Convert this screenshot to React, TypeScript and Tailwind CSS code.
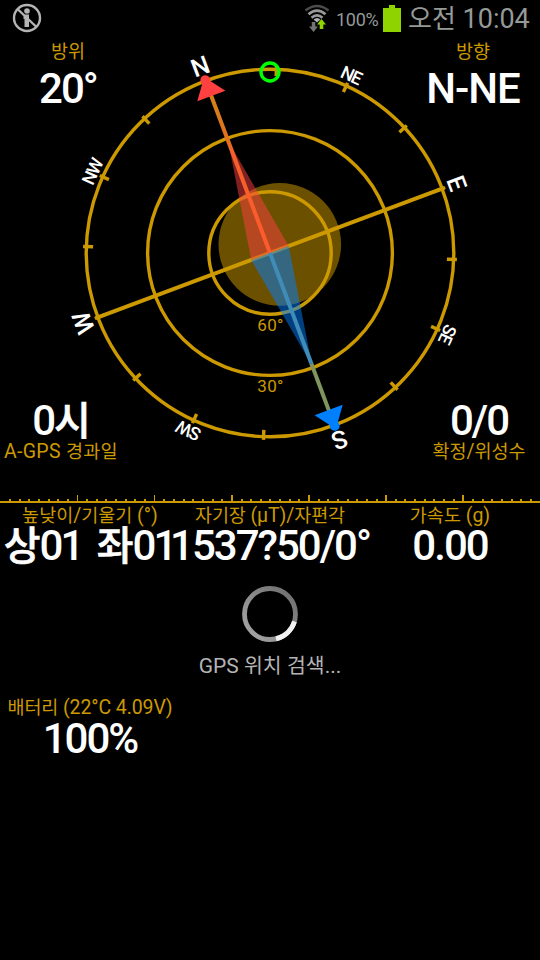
import React from "react";

const GOLD = "#cc9900";

const LABELS = [
  { t: "N", a: 0, big: true },
  { t: "NE", a: 45, big: false },
  { t: "E", a: 90, big: true },
  { t: "SE", a: 135, big: false },
  { t: "S", a: 180, big: true },
  { t: "SW", a: 225, big: false },
  { t: "W", a: 270, big: true },
  { t: "NW", a: 315, big: false },
];

function Compass() {
  const ticks = Array.from({ length: 16 }, (_, i) => i * 22.5);
  return (
    <svg width="400" height="400" viewBox="-200 -200 400 400" className="block overflow-visible">
      <defs>
        <linearGradient id="north" gradientUnits="userSpaceOnUse" x1="0" y1="-186" x2="0" y2="0">
          <stop offset="0" stopColor="#cf8a10" />
          <stop offset=".36" stopColor="#e27020" />
          <stop offset=".42" stopColor="#f4602a" />
          <stop offset="1" stopColor="#ff5a2c" />
        </linearGradient>
      </defs>
      <circle cx="9.8" cy="-8.6" r="61.3" fill="#6b5000" />
      <g fill="none" stroke={GOLD} strokeWidth="3.4">
        <circle r="61.2" />
        <circle r="122.4" />
        <circle r="183.8" />
      </g>
      <g transform="rotate(-20.5)">
        {ticks.map((a) => (
          <line key={a} y1="-177" y2="-187" stroke={GOLD} strokeWidth="3.4" transform={`rotate(${a})`} />
        ))}
        <line x1="-186" x2="186" stroke={GOLD} strokeWidth="4" />
        <path d="M0-120L20 0H-20Z" fill="#ff4040" fillOpacity=".5" />
        <path d="M0 120L20 0H-20Z" fill="#0080ff" fillOpacity=".5" />
        <rect x="-2" y="-186" width="4" height="186" fill="url(#north)" />
        <rect x="-2" y="118" width="4" height="66" fill="#7f9560" />
        <rect x="-2" y="0" width="4" height="118" fill="#408cb8" />
        <g fill="#ff4040">
          <circle cy="-184.500" r="5" />
          <path d="M0-188L15-167.500H-15Z" />
        </g>
        <g fill="#0080ff">
          <circle cy="184.500" r="5" />
          <path d="M0 188L15 167.500H-15Z" />
        </g>
        {LABELS.map((l) => (
          <text
            key={l.t}
            transform={`rotate(${l.a})`}
            y={l.big ? -190.5 : -189}
            textAnchor="middle"
            fill="#fff"
            fontWeight="500"
            fontSize={l.big ? 25 : 18}
            letterSpacing={l.big ? 0 : -1.4}
          >
            {l.t}
          </text>
        ))}
      </g>
      <circle cy="-181" r="9" fill="none" stroke="#00ff00" strokeWidth="3.4" />
      <g fill={GOLD} fontSize="17" textAnchor="middle" letterSpacing="0.3">
        <text x="0.5" y="78">60°</text>
        <text x="0.5" y="139">30°</text>
      </g>
    </svg>
  );
}

function Ruler() {
  const marks = Array.from({ length: 55 }, (_, i) => i + 1);
  return (
    <svg width="540" height="8" viewBox="0 0 540 8" className="block shrink-0">
      <rect y="6" width="540" height="2" fill={GOLD} />
      {marks.map((i) => {
        const major = i % 8 === 0;
        return (
          <rect
            key={i}
            x={Math.round(i * 9.645 - 0.6)}
            y={major ? 0 : 4}
            width={major && i < 20 ? 1 : 2}
            height={major ? 6 : 2}
            fill={GOLD}
          />
        );
      })}
    </svg>
  );
}

const HANGUL = /([\uac00-\ud7a3]+)/;

/* Hangul runs take their own size and tracking next to the Latin text. */
function Mixed({ text, hangul }: { text: string; hangul: string }) {
  return (
    <>
      {text.split(HANGUL).map((part, i) =>
        i % 2 ? (
          <span key={i} className={hangul}>
            {part}
          </span>
        ) : (
          part
        )
      )}
    </>
  );
}

function Label({ text, className = "" }: { text: string; className?: string }) {
  return (
    <div className={`h-6 text-[19.5px] leading-6 whitespace-pre text-[#cc9900] ${className}`}>
      <Mixed text={text} hangul="text-[18.5px]" />
    </div>
  );
}

function Value({ text, className = "tracking-[-2px]" }: { text: string; className?: string }) {
  return (
    <div className={`h-[42px] text-[42px] leading-[42px] font-medium whitespace-pre text-white ${className}`}>
      <Mixed text={text} hangul="text-[40px] tracking-[-1px] [-webkit-text-stroke:0.6px_white]" />
    </div>
  );
}

function StatusBar() {
  return (
    <div className="flex h-[40px] shrink-0 items-start text-[#959a97]">
      <svg width="32" height="32" viewBox="0 0 32 32" className="mt-[3px] ml-[11px]">
        <g fill="none" stroke="#b4b4b4" strokeWidth="2.4">
          <circle cx="16" cy="15" r="13" />
          <path d="M6.500 6L25.500 24" />
        </g>
        <circle cx="16" cy="8" r="2.800" fill="#b4b4b4" />
        <path d="M12.500 11.500h5.500v12.500h-4.500v-8h-1z" fill="#b4b4b4" />
      </svg>
      <svg width="28" height="30" viewBox="0 0 28 30" className="mt-[3px] ml-[260px]">
        <g fill="none" strokeWidth="2.600">
          <path d="M2.500 7.500Q14-1.500 25.500 7.500" stroke="#4c4c4c" />
          <path d="M5.500 11.200Q14 4 22.500 11.200" stroke="#9a9a9a" />
          <path d="M8.500 14.800Q14 10 19.500 14.800" stroke="#9a9a9a" />
        </g>
        <path d="M10.500 16.500Q14 13.500 17.500 16.500L14 19.500Z" fill="#b0b0b0" />
        <path d="M8.800 19h3.500v4.500h2.700L10.500 29 6 23.500h2.800z" fill="#747474" />
        <path d="M16.700 26h3.600v-4.500h2.700L18.500 16 14 21.500h2.700z" fill="#8fd400" />
      </svg>
      <div className="mt-2 ml-[5px] w-[47px] text-[18px] leading-6 tracking-[-0.3px]">100%</div>
      <svg width="18" height="27" viewBox="0 0 18 27" className="mt-[5px]">
        <path d="M6 0h6v3h6v24H0V3h6z" fill="#8fd400" />
      </svg>
      <div className="mt-[3px] ml-[7px] text-[27px] leading-[32px] whitespace-pre">
        <Mixed text="오전 10:04" hangul="text-[26px]" />
      </div>
    </div>
  );
}

function Spinner() {
  return (
    <svg width="56" height="56" viewBox="-28 -28 56 56" className="block">
      <defs>
        <linearGradient id="ring" x1="0" y1="1" x2="1" y2="0">
          <stop offset="0" stopColor="#a8a8a8" />
          <stop offset="1" stopColor="#6c6c6c" />
        </linearGradient>
      </defs>
      <circle r="25.500" fill="none" stroke="url(#ring)" strokeWidth="4.800" />
      <path d="M24.500 7.500A25.600 25.600 0 0 1 6 24.900" fill="none" stroke="#f2f2f2" strokeWidth="4.800" />
    </svg>
  );
}

export default function App() {
  return (
    <div className="flex h-[960px] w-[540px] flex-col overflow-hidden bg-black font-['Roboto','Noto_Sans_CJK_KR',sans-serif]">
      <StatusBar />
      <div className="grid h-[424px] shrink-0 grid-cols-1 grid-rows-1">
        <div className="col-start-1 row-start-1 flex h-[424px] justify-center pt-[12.5px]">
          <Compass />
        </div>
        <div className="col-start-1 row-start-1 flex h-[424px] flex-col justify-between">
          <div className="flex justify-between">
            <div className="flex w-[136px] flex-col items-center gap-1">
              <Label text="방위" />
              <Value text="20°" />
            </div>
            <div className="flex w-[134px] flex-col items-center gap-1">
              <Label text="방향" />
              <Value text="N-NE" className="tracking-[-1px]" />
            </div>
          </div>
          <div className="flex justify-between">
            <div className="flex w-[122px] flex-col items-center">
              <Value text="0시" />
              <div className="-mt-[2px]">
                <Label text="A-GPS 경과일" className="tracking-[0.3px]" />
              </div>
            </div>
            <div className="flex w-[122px] flex-col items-center">
              <Value text="0/0" />
              <div className="-mt-[2px]">
                <Label text="확정/위성수" />
              </div>
            </div>
          </div>
        </div>
      </div>
      <div className="mt-[31px]">
        <Ruler />
      </div>
      <div className="mt-px grid grid-cols-3">
        <div className="flex w-[180px] flex-col items-center">
          <Label text="높낮이/기울기 (°)" />
          <Value text="상01 좌01" className="-mt-[3px] mr-[2px] tracking-[-3px] [word-spacing:8px]" />
        </div>
        <div className="flex w-[180px] flex-col items-center">
          <Label text="자기장 (µT)/자편각" className="tracking-[-0.1px]" />
          <Value text="1537?50/0°" className="-mt-[3px] tracking-[-2px]" />
        </div>
        <div className="flex w-[180px] flex-col items-center">
          <Label text="가속도 (g)" />
          <Value text="0.00" className="-mt-[3px] tracking-[-2px]" />
        </div>
      </div>
      <div className="mt-[19px] flex flex-col items-center">
        <Spinner />
        <div className="mt-[12px] h-6 text-[21px] leading-6 whitespace-pre text-[#b4b4b4]">
          <Mixed text="GPS 위치 검색..." hangul="text-[20.500px]" />
        </div>
      </div>
      <div className="mt-[18px] flex w-[180px] flex-col items-center">
        <Label text="배터리 (22°C 4.09V)" className="tracking-[-0.1px]" />
        <Value text="100%" className="-mt-[2px] tracking-[-2px]" />
      </div>
    </div>
  );
}
